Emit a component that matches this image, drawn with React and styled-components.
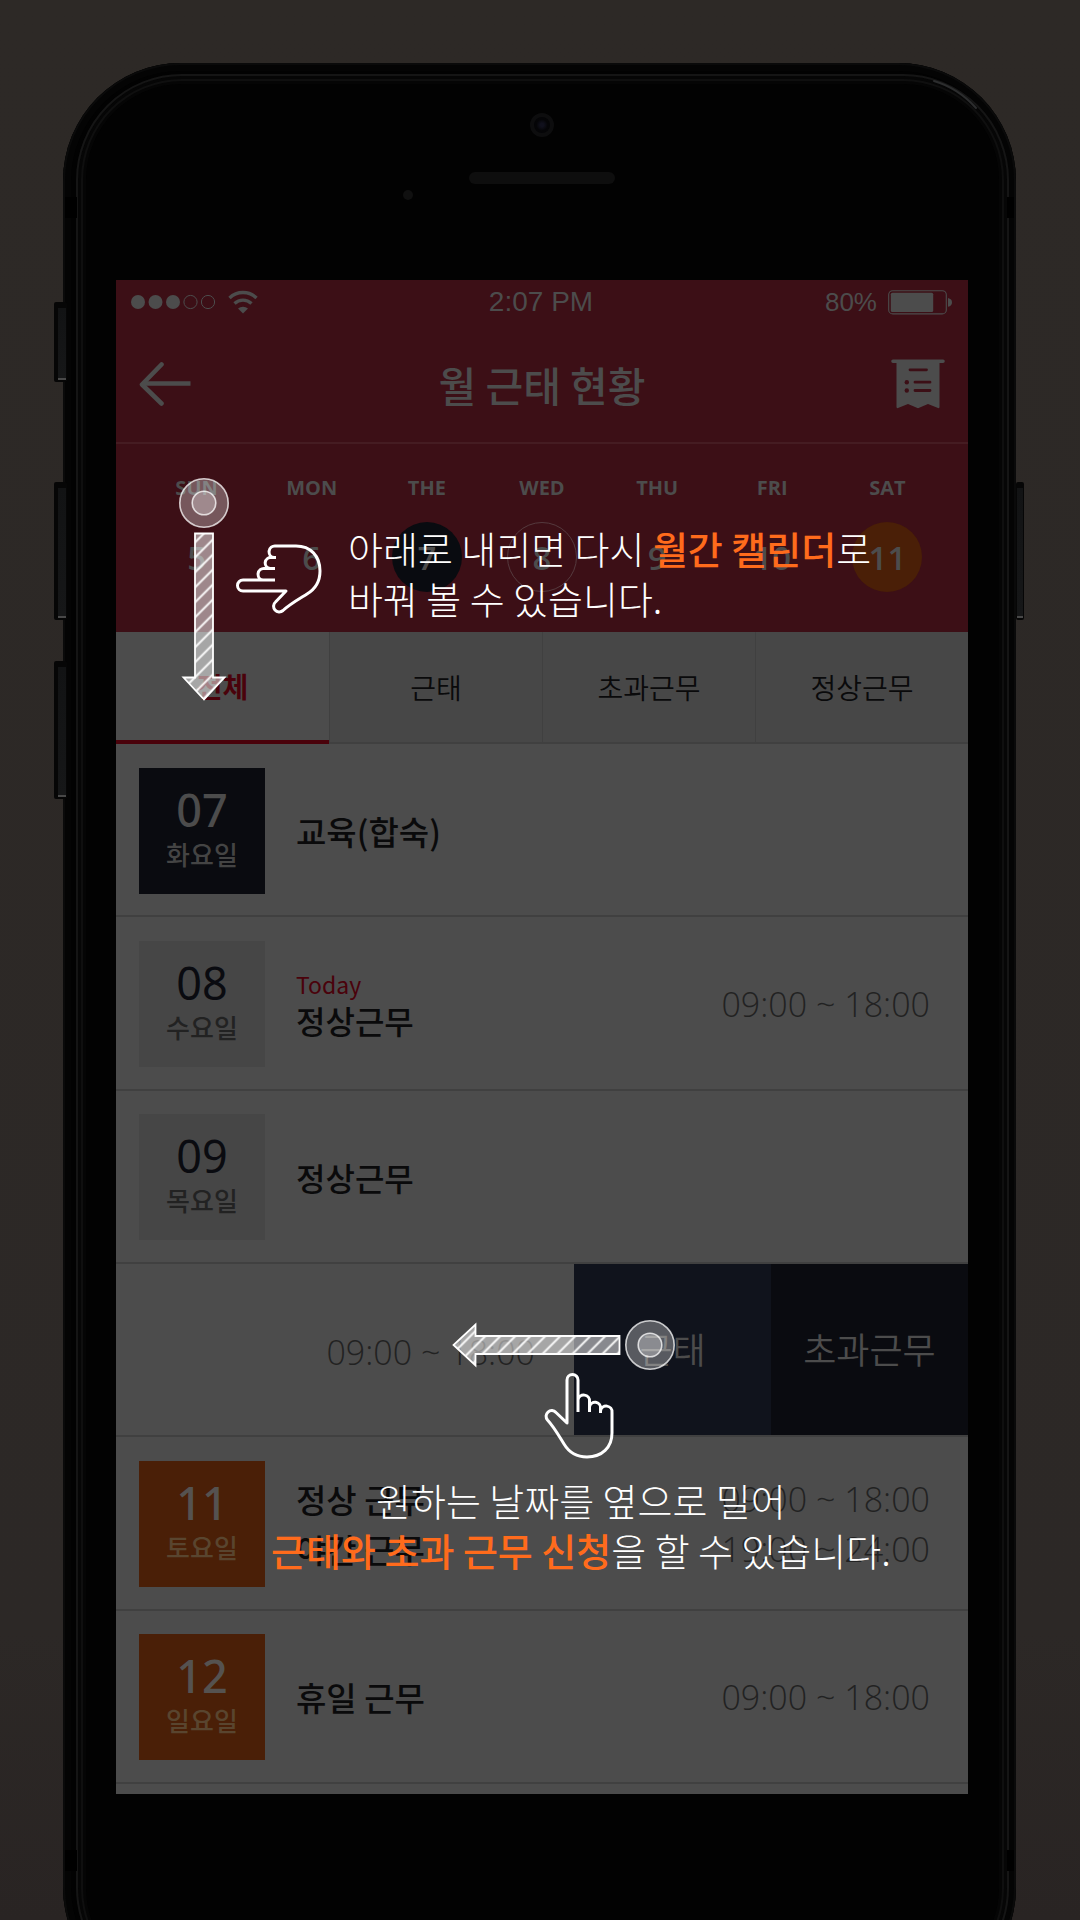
import React from "react";
import styled, { createGlobalStyle } from "styled-components";

const korean = '"Noto Sans CJK KR", sans-serif';
const latin = '"Open Sans", "Noto Sans CJK KR", sans-serif';

const color = {
  wall: "#2d2926",
  red: "#3c0f16",
  redLine: "#451c22",
  accent: "#4a020b",
  ink: "#0a0a0b",
  navy: "#0a0b10",
  blue: "#10131c",
  orange: "#4a1f07",
  dim: "#4c4c4c",
  paper: "#4c4c4c",
  panel: "#474747",
  line: "#404040",
  muted: "#222222",
  highlight: "#ff6b1c",
};

const GlobalStyle = createGlobalStyle`
  *, *::before, *::after { box-sizing: border-box; }
  body { margin: 0; background: ${color.wall}; }
  button { margin: 0; padding: 0; border: 0; background: none; color: inherit; font: inherit; cursor: pointer; }
  svg { display: block; }
`;

const Stage = styled.div`
  min-height: 100vh;
  padding: 63px 64px 0 63px;
  overflow: hidden;
  background: linear-gradient(#2d2926, #2c2826 85%, #292423);
  font-family: ${korean};
`;

const Phone = styled.div`
  position: relative;
  margin-bottom: -85px;
  padding: 0 48px 211px 53px;
  border-radius: 118px;
  background: #020202;
  box-shadow: inset 0 0 0 2px #0a0a0a, inset 0 0 0 8px #040404;

  &::before {
    content: "";
    position: absolute;
    inset: 11px 7px 11px 13px;
    border: 2px solid #151515;
    border-radius: 106px;
    box-shadow: inset 0 0 0 3px #060606, inset 0 0 0 5px #0f0f0f, inset 0 0 0 8px #050505;
    pointer-events: none;
  }
`;

const SideKey = styled.span`
  position: absolute;
  top: ${(p) => p.$top}px;
  ${(p) => p.$side}: ${(p) => (p.$side === "left" ? -9 : -8)}px;
  width: ${(p) => (p.$side === "left" ? 13 : 8)}px;
  height: ${(p) => p.$height}px;
  border: solid #060606;
  border-width: 6px 1px 2px ${(p) => (p.$side === "left" ? 4 : 1)}px;
  border-radius: 2px;
  background: linear-gradient(#121314, #161718) top / 100% calc(100% - 2px) no-repeat, #484848;
`;

const Antenna = styled.span`
  position: absolute;
  ${(p) => p.$edge}: 134px;
  ${(p) => p.$side}: 2px;
  width: ${(p) => (p.$side === "left" ? 12 : 7)}px;
  height: 21px;
  background: #000;
`;

const CornerGlint = styled.svg`
  position: absolute;
  top: 14px;
  right: 34px;
`;

const Forehead = styled.div`
  display: flex;
  flex-direction: column;
  align-items: center;
  gap: 35px;
  height: 217px;
  padding-top: 50px;
`;

const Camera = styled.span`
  width: 24px;
  height: 24px;
  border: 4px solid #0d0d0e;
  border-radius: 50%;
  background: radial-gradient(#10101c 15%, #050507 50%);
`;

const Speaker = styled.span`
  position: relative;
  width: 146px;
  height: 12px;
  border-radius: 6px;
  background: #0e0e0e;

  &::before {
    content: "";
    position: absolute;
    top: 18px;
    left: -66px;
    width: 10px;
    height: 10px;
    border-radius: 50%;
    background: #101010;
  }
`;

const Screen = styled.main`
  position: relative;
  padding-bottom: 10px;
  background: ${color.paper};
`;

const Top = styled.header`
  background: ${color.red};
  color: ${color.dim};
`;

const StatusBar = styled.div`
  display: grid;
  grid-template-columns: 1fr auto 1fr;
  align-items: center;
  height: 44px;
  padding: 0 16px 0 14px;
  font-family: "Liberation Sans", Arial, sans-serif;
  line-height: 44px;
`;

const Clock = styled.span`
  font-size: 28px;
`;

const Percent = styled.span`
  font-size: 26px;
`;

const StatusGroup = styled.div`
  display: flex;
  align-items: center;
  justify-content: ${(p) => (p.$end ? "flex-end" : "flex-start")};
  gap: 11px;
`;

const TitleBar = styled.div`
  display: grid;
  grid-template-columns: 54px 1fr 54px;
  align-items: center;
  height: 120px;
  padding: 2px 23px 0;
  border-bottom: 2px solid ${color.redLine};
`;

const Title = styled.h1`
  margin: 0;
  font-size: 41px;
  font-weight: 500;
  line-height: 60px;
  text-align: center;
`;

const IconButton = styled.button`
  display: flex;
  justify-content: ${(p) => (p.$end ? "flex-end" : "flex-start")};
`;

const Week = styled.div`
  display: grid;
  grid-template-columns: repeat(7, 1fr);
  padding: 30px 23px 40px;
  font-family: ${latin};
`;

const Day = styled.button`
  display: flex;
  flex-direction: column;
  align-items: center;
  gap: 20px;
`;

const DayName = styled.span`
  font-size: 20px;
  font-weight: 700;
  line-height: 28px;
`;

const DayNumber = styled.span`
  width: 70px;
  height: 70px;
  border: 1px solid ${(p) => (p.$ring ? "#553a3e" : "transparent")};
  border-radius: 50%;
  background: ${(p) => p.$fill || "transparent"};
  font-size: 33px;
  font-weight: 600;
  line-height: 70px;
`;

const Tabs = styled.nav`
  display: grid;
  grid-template-columns: repeat(4, 1fr);
`;

const Tab = styled.button`
  height: 112px;
  border-left: ${(p) => (p.$active ? 0 : 1)}px solid ${color.line};
  border-bottom: ${(p) => (p.$active ? `4px solid ${color.accent}` : `2px solid ${color.line}`)};
  background: ${(p) => (p.$active ? color.paper : color.panel)};
  color: ${(p) => (p.$active ? color.accent : color.ink)};
  font-size: 28px;
  font-weight: ${(p) => (p.$active ? 700 : 350)};
  line-height: 40px;
`;

const List = styled.ul`
  display: grid;
  grid-template-rows: repeat(6, 1fr);
  min-height: 1040px;
  margin: 0;
  padding: 0;
  list-style: none;
`;

const Row = styled.li`
  display: flex;
  align-items: center;
  gap: 31px;
  padding: 2px 38px 0 23px;
  border-bottom: 2px solid ${color.line};
`;

const SwipedRow = styled(Row)`
  align-items: stretch;
  gap: 39px;
  padding: 0;
`;

const tones = {
  navy: { bg: color.navy, number: color.dim, name: "#444444", weight: 500 },
  gray: { bg: "#464646", number: color.navy, name: color.muted, weight: 400 },
  orange: { bg: color.orange, number: "#555250", name: "#59452f", weight: 500 },
};

const DateBox = styled.div`
  display: flex;
  flex: none;
  flex-direction: column;
  align-items: center;
  width: 126px;
  height: 126px;
  padding-top: 19px;
  background: ${(p) => tones[p.$tone].bg};
  color: ${(p) => tones[p.$tone].number};
`;

const DateNumber = styled.span`
  font-family: "Noto Sans", "Open Sans", sans-serif;
  font-size: 45px;
  font-weight: ${(p) => tones[p.$tone].weight};
  line-height: 46px;
`;

const DateName = styled.span`
  color: ${(p) => tones[p.$tone].name};
  font-size: 26px;
  font-weight: 500;
  line-height: 42px;
`;

const Work = styled.div`
  display: flex;
  flex: 1;
  flex-direction: column;
  padding-top: ${(p) => (p.$today ? 6 : 0)}px;
`;

const Today = styled.span`
  color: ${color.accent};
  font-size: 23px;
  line-height: 26px;
`;

const WorkName = styled.span`
  color: ${color.ink};
  font-size: ${(p) => (p.$short ? 32 : 33)}px;
  font-weight: 500;
  line-height: ${(p) => (p.$tight ? 46 : 50)}px;
`;

const Times = styled.div`
  display: flex;
  flex-direction: column;
  justify-content: center;
  margin-left: auto;
  padding-top: ${(p) => (p.$lowered ? 4 : 0)}px;
  color: ${color.muted};
  font-family: ${latin};
  font-size: 34px;
  font-weight: 300;
  line-height: 50px;
  text-align: right;
`;

const Actions = styled.div`
  display: flex;
`;

const Action = styled.button`
  width: 197px;
  background: ${(p) => (p.$dark ? color.navy : color.blue)};
  color: ${color.dim};
  font-size: 36px;
  font-weight: 350;
  line-height: 50px;
  padding-bottom: 4px;
`;

const Guide = styled.section`
  position: absolute;
  top: ${(p) => p.$top}px;
  left: ${(p) => p.$left}px;
  display: flex;
  flex-direction: ${(p) => (p.$stacked ? "column" : "row")};
  align-items: ${(p) => (p.$stacked ? "center" : "flex-start")};
  pointer-events: none;
`;

const GuideText = styled.p`
  margin: ${(p) => (p.$beside ? "46px 0 0 24px" : "14px 0 0")};
  color: #fff;
  font-size: 38px;
  font-weight: 300;
  line-height: 50px;
  text-align: ${(p) => (p.$beside ? "left" : "center")};
  white-space: nowrap;
`;

const Highlight = styled.strong`
  color: ${color.highlight};
  font-weight: 500;
`;

const HandSlot = styled.div`
  margin: ${(p) => (p.$beside ? "65px 0 0 2px" : "0")};
`;

const SwipeSlot = styled.div`
  padding-right: ${(p) => (p.$stacked ? 36 : 0)}px;
`;

function SignalIcon() {
  return (
    <svg width="87" height="16" viewBox="0 0 87 16" aria-hidden="true">
      {[0, 1, 2, 3, 4].map((i) => (
        <circle
          key={i}
          cx={8 + i * 17.5}
          cy="8"
          r={i < 3 ? 7 : 6.6}
          fill={i < 3 ? color.dim : "none"}
          stroke={i < 3 ? "none" : color.dim}
          strokeWidth="1"
        />
      ))}
    </svg>
  );
}

function WifiIcon() {
  return (
    <svg width="30" height="24" viewBox="0 0 30 24" fill="none" stroke={color.dim} strokeWidth="3.4" aria-hidden="true">
      <path d="M1.5 8 a19.5 19.5 0 0 1 27 0" />
      <path d="M6.5 13.5 a12.5 12.5 0 0 1 17 0" />
      <path d="M10 18.6 a7.5 7.5 0 0 1 10 0 L15 23.4z" fill={color.dim} stroke="none" />
    </svg>
  );
}

function BatteryIcon() {
  return (
    <svg width="64" height="25" viewBox="0 0 64 25" aria-hidden="true">
      <rect x="0.7" y="0.7" width="57.6" height="23.2" rx="4" fill="none" stroke={color.dim} strokeWidth="1.1" />
      <rect x="2.8" y="2.8" width="42.4" height="19.2" rx="1.5" fill={color.dim} />
      <path d="M60 8 q4 1 4 4.4 q0 3.4 -4 4.4z" fill={color.dim} />
    </svg>
  );
}

function BackIcon() {
  return (
    <svg width="52" height="46" viewBox="0 0 52 46" fill="none" stroke={color.dim} strokeWidth="4.6" strokeLinejoin="round" aria-hidden="true">
      <path d="M22.5 3.5 L3 23.5 L22.5 42.5" strokeLinecap="round" />
      <path d="M4 22.5 H51.5" />
    </svg>
  );
}

function ReceiptIcon() {
  return (
    <svg width="54" height="50" viewBox="0 0 54 50" aria-hidden="true">
      <path
        d="M2 0.5 H52 a1.8 1.8 0 0 1 0 3.6 H48.5 V48 q0 1.5 -1.5 1 L37 45 L27 49.2 L17 45 L7 49 q-1.5 .5 -1.5 -1 V4.1 H2 a1.8 1.8 0 0 1 0 -3.6z"
        fill={color.dim}
      />
      <g stroke={color.red} strokeWidth="2.8" strokeLinecap="round">
        <path d="M19 10.8 H35.5 M24 23.2 H39 M24 31.5 H39" />
      </g>
      <circle cx="15.8" cy="23.2" r="2.2" fill={color.red} />
      <circle cx="15.8" cy="31.5" r="2.2" fill={color.red} />
    </svg>
  );
}

function Stripes({ id }) {
  return (
    <defs>
      <pattern id={id} width="10.6" height="10.6" patternUnits="userSpaceOnUse" patternTransform="rotate(45)">
        <rect width="10.6" height="10.6" fill="#fff" fillOpacity="0.5" />
        <path d="M5.3 0 V10.6" stroke="#fff" strokeWidth="1.9" />
      </pattern>
    </defs>
  );
}

function Touch({ cx, cy }) {
  return (
    <g fill="#fff" fillOpacity="0.3" stroke="#fff" strokeOpacity="0.75" strokeWidth="1.6">
      <circle cx={cx} cy={cy} r="24.2" />
      <circle cx={cx} cy={cy} r="11.8" />
    </g>
  );
}

function SwipeDown() {
  return (
    <svg width="52" height="226" viewBox="0 0 52 226" aria-hidden="true">
      <Stripes id="stripes-down" />
      <Touch cx={26} cy={26} />
      <path
        d="M17 56.5 H35 V200.5 H46.5 L26 222.5 L5.5 200.5 H17z"
        fill="url(#stripes-down)"
        stroke="#fff"
        strokeWidth="1.8"
      />
    </svg>
  );
}

function SwipeLeft() {
  return (
    <svg width="226" height="52" viewBox="0 0 226 52" aria-hidden="true">
      <Stripes id="stripes-left" />
      <Touch cx={200} cy={26} />
      <path
        d="M169.5 17 V35 H25.5 V46.5 L3.5 26 L25.5 5.5 V17z"
        fill="url(#stripes-left)"
        stroke="#fff"
        strokeWidth="1.8"
      />
    </svg>
  );
}

function HandShape() {
  return (
    <path d="M36 43 V11 a5.5 5.5 0 0 0 -11 0 V54 L14 43.5 a5.6 5.6 0 0 0 -8.5 7.5 C12 58 17 67 22 75 C26.5 82.5 34 88 45 88 C60 88 70 78.5 70 64 V43.5 a5.8 5.8 0 0 0 -11.5 -1.5 M58.5 44 V39.5 a5.5 5.5 0 0 0 -11 -1.5 M47.5 43 V32.5 a5.8 5.8 0 0 0 -11.5 -1.5" />
  );
}

function HandUp() {
  return (
    <svg width="75" height="90" viewBox="1 2 75 90" fill="none" stroke="#fff" strokeWidth="3" strokeLinejoin="round" aria-hidden="true">
      <HandShape />
    </svg>
  );
}

function HandLeft() {
  return (
    <svg width="92" height="75" viewBox="0 0 92 75" fill="none" stroke="#fff" strokeWidth="3" strokeLinejoin="round" aria-hidden="true">
      <g transform="translate(0 74) rotate(-90)">
        <HandShape />
      </g>
    </svg>
  );
}

const days = [
  { name: "SUN", number: 5 },
  { name: "MON", number: 6 },
  { name: "THE", number: 7, fill: "#090b10" },
  { name: "WED", number: 8, ring: true },
  { name: "THU", number: 9 },
  { name: "FRI", number: 10 },
  { name: "SAT", number: 11, fill: color.orange },
];

const tabs = ["전체", "근태", "초과근무", "정상근무"];

const rows = [
  { date: "07", day: "화요일", tone: "navy", works: ["교육(합숙)"], times: [] },
  { date: "08", day: "수요일", tone: "gray", today: true, works: ["정상근무"], times: ["09:00 ~ 18:00"] },
  { date: "09", day: "목요일", tone: "gray", works: ["정상근무"], times: [] },
  { swiped: true, times: ["09:00 ~ 18:00"] },
  { date: "11", day: "토요일", tone: "orange", works: ["정상 근무", "야간 근무"], times: ["09:00 ~ 18:00", "19:00 ~ 24:00"] },
  { date: "12", day: "일요일", tone: "orange", works: ["휴일 근무"], times: ["09:00 ~ 18:00"] },
];

function TimeList({ times, lowered }) {
  return (
    <Times $lowered={lowered}>
      {times.map((t) => (
        <span key={t}>{t}</span>
      ))}
    </Times>
  );
}

function ScheduleRow({ row }) {
  if (row.swiped) {
    return (
      <SwipedRow>
        <TimeList times={row.times} lowered />
        <Actions>
          <Action type="button">근태</Action>
          <Action type="button" $dark>초과근무</Action>
        </Actions>
      </SwipedRow>
    );
  }
  return (
    <Row>
      <DateBox $tone={row.tone}>
        <DateNumber $tone={row.tone}>{row.date}</DateNumber>
        <DateName $tone={row.tone}>{row.day}</DateName>
      </DateBox>
      <Work $today={row.today}>
        {row.today && <Today>Today</Today>}
        {row.works.map((w) => (
          <WorkName key={w} $tight={row.today} $short={row.tone === "gray"}>{w}</WorkName>
        ))}
      </Work>
      <TimeList times={row.times} />
    </Row>
  );
}

export default function App() {
  return (
    <Stage>
      <GlobalStyle />
      <Phone>
        <SideKey $side="left" $top={239} $height={80} />
        <SideKey $side="left" $top={419} $height={138} />
        <SideKey $side="left" $top={598} $height={138} />
        <SideKey $side="right" $top={419} $height={138} />
        <Antenna $side="left" $edge="top" />
        <Antenna $side="right" $edge="top" />
        <Antenna $side="left" $edge="bottom" />
        <Antenna $side="right" $edge="bottom" />
        <CornerGlint width="56" height="36" viewBox="0 0 56 36" fill="none" aria-hidden="true">
          <path d="M8 4 Q32 11 50 31" stroke="#2c2d2e" strokeWidth="2" strokeLinecap="round" />
        </CornerGlint>
        <Forehead>
          <Camera />
          <Speaker />
        </Forehead>
        <Screen>
          <Top>
            <StatusBar>
              <StatusGroup>
                <SignalIcon />
                <WifiIcon />
              </StatusGroup>
              <Clock>2:07 PM</Clock>
              <StatusGroup $end>
                <Percent>80%</Percent>
                <BatteryIcon />
              </StatusGroup>
            </StatusBar>
            <TitleBar>
              <IconButton type="button" aria-label="뒤로">
                <BackIcon />
              </IconButton>
              <Title>월 근태 현황</Title>
              <IconButton type="button" aria-label="내역" $end>
                <ReceiptIcon />
              </IconButton>
            </TitleBar>
            <Week>
              {days.map((d) => (
                <Day key={d.name} type="button">
                  <DayName>{d.name}</DayName>
                  <DayNumber $fill={d.fill} $ring={d.ring}>{d.number}</DayNumber>
                </Day>
              ))}
            </Week>
          </Top>
          <Tabs>
            {tabs.map((t, i) => (
              <Tab key={t} type="button" $active={i === 0}>
                {t}
              </Tab>
            ))}
          </Tabs>
          <List>
            {rows.map((row, i) => (
              <ScheduleRow key={i} row={row} />
            ))}
          </List>

          <Guide $top={197} $left={62}>
            <SwipeSlot>
              <SwipeDown />
            </SwipeSlot>
            <HandSlot $beside>
              <HandLeft />
            </HandSlot>
            <GuideText $beside>
              아래로 내리면 다시 <Highlight>월간 캘린더</Highlight>로
              <br />
              바꿔 볼 수 있습니다.
            </GuideText>
          </Guide>

          <Guide $top={1039} $left={155} $stacked>
            <SwipeSlot $stacked>
              <SwipeLeft />
            </SwipeSlot>
            <HandSlot>
              <HandUp />
            </HandSlot>
            <GuideText>
              원하는 날짜를 옆으로 밀어
              <br />
              <Highlight>근태와 초과 근무 신청</Highlight>을 할 수 있습니다.
            </GuideText>
          </Guide>
        </Screen>
      </Phone>
    </Stage>
  );
}
